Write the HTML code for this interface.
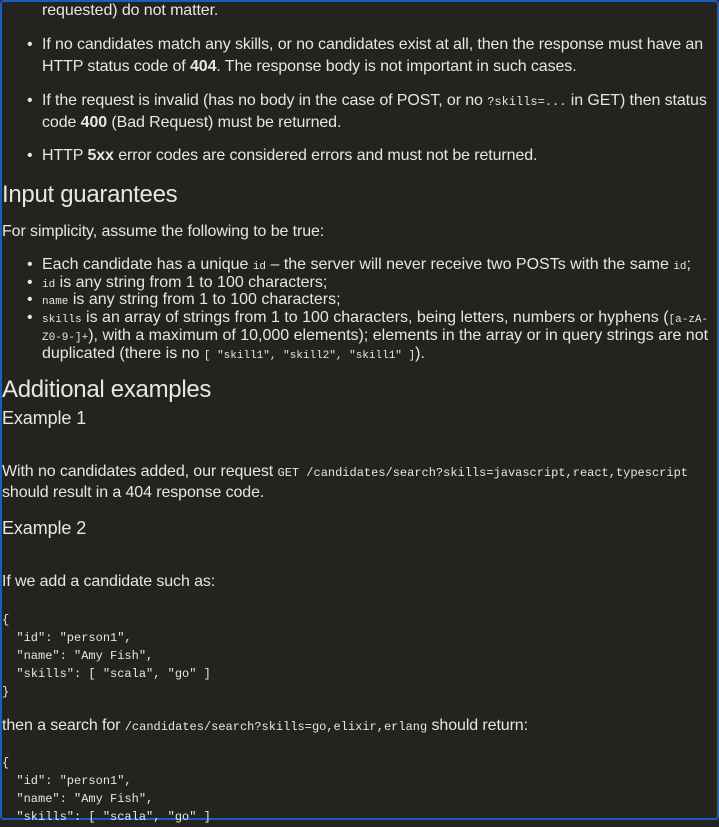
<!DOCTYPE html>
<html><head><meta charset="utf-8"><style>
html,body{margin:0;padding:0;background:#232320;}
body{width:719px;height:820px;overflow:hidden;position:relative;font-family:"Liberation Sans",sans-serif;color:#e6e6e3;font-size:16px;}
.frame{position:absolute;left:0;top:0;width:715px;height:816px;border:2px solid #1a5bc8;border-radius:4px;}
.l{position:absolute;white-space:pre;line-height:20px;letter-spacing:-0.1px;}
.d::before{content:"•";position:absolute;left:-15px;}
code,.m{font-family:"Liberation Mono",monospace;font-size:12px;letter-spacing:0;}
.h{font-size:24px;font-weight:300;line-height:30px;letter-spacing:-0.3px;}
.h2{font-size:18px;font-weight:300;line-height:22px;}
.s{font-size:16px;letter-spacing:0;}
.s code{font-size:11px;}
</style></head><body>
<div class="frame"></div>
<div class="l" style="left:42px;top:1px">requested) do not matter.</div>
<div class="l d" style="left:42px;top:35px">If no candidates match any skills, or no candidates exist at all, then the response must have an</div>
<div class="l" style="left:42px;top:57px">HTTP status code of <b>404</b>. The response body is not important in such cases.</div>
<div class="l d" style="left:42px;top:91px">If the request is invalid (has no body in the case of POST, or no <code>?skills=...</code> in GET) then status</div>
<div class="l" style="left:42px;top:113px">code <b>400</b> (Bad Request) must be returned.</div>
<div class="l d" style="left:42px;top:146px">HTTP <b>5xx</b> error codes are considered errors and must not be returned.</div>
<div class="l h" style="left:2px;top:180px">Input guarantees</div>
<div class="l" style="left:2px;top:222px">For simplicity, assume the following to be true:</div>
<div class="l d s" style="left:42px;top:255px">Each candidate has a unique <code>id</code> – the server will never receive two POSTs with the same <code>id</code>;</div>
<div class="l d s" style="left:42px;top:273px"><code>id</code> is any string from 1 to 100 characters;</div>
<div class="l d s" style="left:42px;top:290px"><code>name</code> is any string from 1 to 100 characters;</div>
<div class="l d s" style="left:42px;top:308px"><code>skills</code> is an array of strings from 1 to 100 characters, being letters, numbers or hyphens (<code>[a-zA-</code></div>
<div class="l s" style="left:42px;top:326px"><code>Z0-9-]+</code>), with a maximum of 10,000 elements); elements in the array or in query strings are not</div>
<div class="l s" style="left:42px;top:344px">duplicated (there is no <code>[ "skill1", "skill2", "skill1" ]</code>).</div>
<div class="l h" style="left:2px;top:375px">Additional examples</div>
<div class="l h2" style="left:2px;top:407px">Example 1</div>
<div class="l" style="left:2px;top:462px">With no candidates added, our request <code>GET /candidates/search?skills=javascript,react,typescript</code></div>
<div class="l" style="left:2px;top:483px">should result in a 404 response code.</div>
<div class="l h2" style="left:2px;top:517px">Example 2</div>
<div class="l" style="left:2px;top:572px">If we add a candidate such as:</div>
<div class="l m" style="left:2px;top:610px">{</div>
<div class="l m" style="left:2px;top:628px">  "id": "person1",</div>
<div class="l m" style="left:2px;top:646px">  "name": "Amy Fish",</div>
<div class="l m" style="left:2px;top:664px">  "skills": [ "scala", "go" ]</div>
<div class="l m" style="left:2px;top:682px">}</div>
<div class="l" style="left:2px;top:716px">then a search for <code>/candidates/search?skills=go,elixir,erlang</code> should return:</div>
<div class="l m" style="left:2px;top:753px">{</div>
<div class="l m" style="left:2px;top:771px">  "id": "person1",</div>
<div class="l m" style="left:2px;top:789px">  "name": "Amy Fish",</div>
<div class="l m" style="left:2px;top:807px">  "skills": [ "scala", "go" ]</div>
</body></html>
